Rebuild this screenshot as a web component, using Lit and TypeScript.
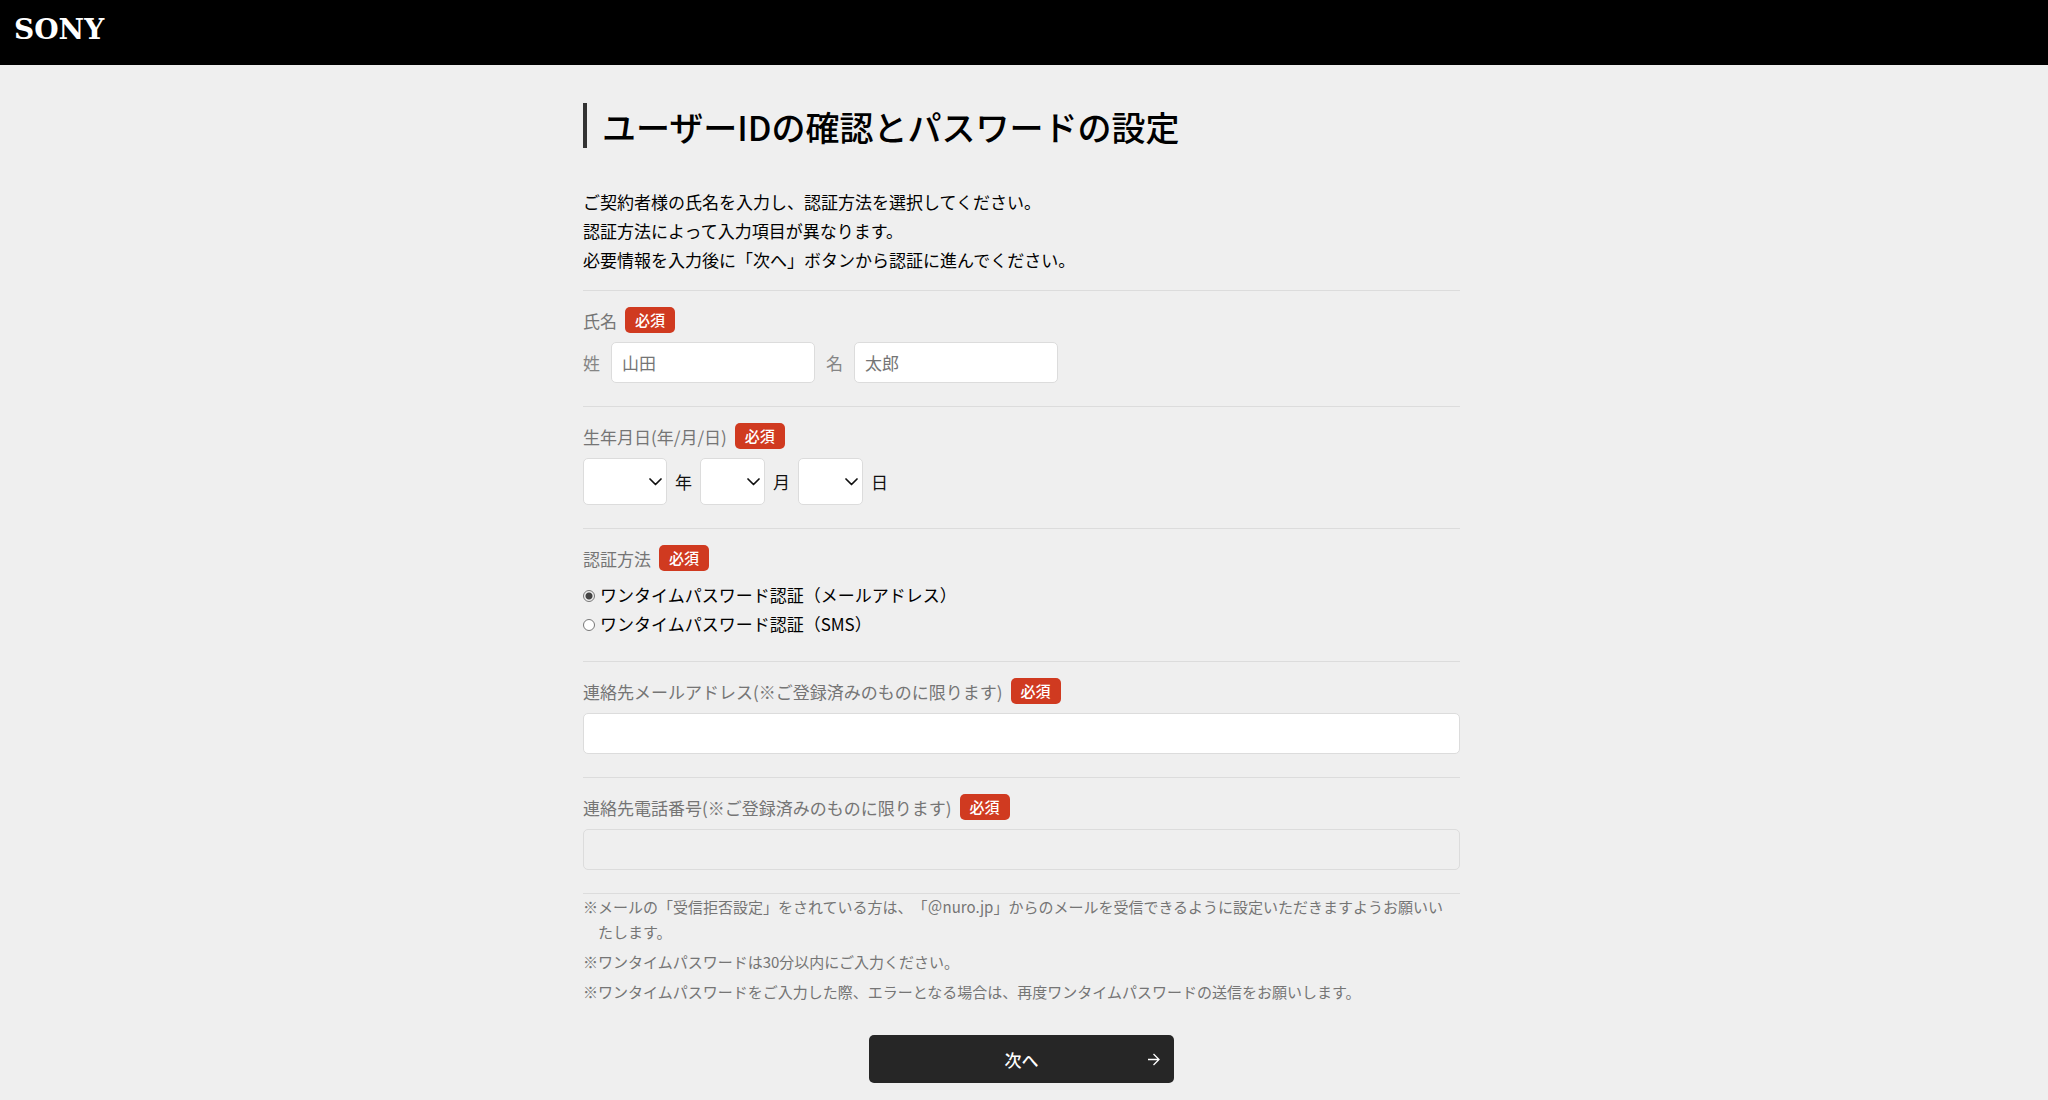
import { LitElement, html, css, svg } from "lit";
import { customElement, state } from "lit/decorators.js";

const range = (from: number, to: number) =>
  Array.from({ length: to - from + 1 }, (_, i) => from + i);

const DATE_PARTS = [
  { id: "year", unit: "年", wide: true, values: range(1920, 2024) },
  { id: "month", unit: "月", wide: false, values: range(1, 12) },
  { id: "day", unit: "日", wide: false, values: range(1, 31) },
];

const METHODS = [
  { id: "mail", text: "ワンタイムパスワード認証（メールアドレス）" },
  { id: "sms", text: "ワンタイムパスワード認証（SMS）" },
];

const NOTES = [
  "※メールの「受信拒否設定」をされている方は、「＠nuro.jp」からのメールを受信できるように設定いただきますようお願いいたします。",
  "※ワンタイムパスワードは30分以内にご入力ください。",
  "※ワンタイムパスワードをご入力した際、エラーとなる場合は、再度ワンタイムパスワードの送信をお願いします。",
];

const chevron = svg`<path d="M1 1 L6.5 6.5 L12 1" fill="none" stroke="#111" stroke-width="1.7" stroke-linecap="round" stroke-linejoin="round"/>`;

@customElement("required-badge")
class RequiredBadge extends LitElement {
  static styles = css`
    :host {
      display: inline-flex;
      align-items: center;
      justify-content: center;
      box-sizing: border-box;
      height: 26px;
      padding: 0 10px;
      border-radius: 5px;
      background: #d03a20;
      color: #fff;
      font-size: 15px;
      font-weight: 500;
      line-height: 26px;
    }
  `;
  render() {
    return html`必須`;
  }
}

@customElement("site-header")
class SiteHeader extends LitElement {
  static styles = css`
    :host {
      display: block;
    }
    .bar {
      display: flex;
      align-items: flex-start;
      box-sizing: border-box;
      height: 65px;
      padding: 14px 14px 0;
      background: #000;
    }
    .logo {
      color: #fff;
      font: bold 28px/32px "DejaVu Serif", "Liberation Serif", serif;
      text-decoration: none;
    }
  `;
  render() {
    return html`<header class="bar"><a class="logo" href="#">SONY</a></header>`;
  }
}

@customElement("app-root")
class AppRoot extends LitElement {
  @state() private method = "mail";

  static styles = css`
    :host {
      display: block;
      min-height: 100vh;
      background: #efefef;
      color: #000;
      font-family: "Noto Sans CJK JP", "Noto Sans", sans-serif;
      font-size: 17px;
      line-height: 29px;
      text-spacing-trim: space-all;
    }
    .page {
      display: flex;
      justify-content: center;
      padding: 38px 21px 16px 16px;
    }
    .content {
      flex: 1;
      max-width: 877px;
    }
    .title {
      margin: 0 0 39px;
      padding: 2px 0 0 15px;
      border-left: 4px solid #333;
      font-size: 34px;
      font-weight: 500;
      line-height: 43px;
    }
    .lead {
      margin: 0 0 16px;
    }
    .group {
      margin: 0;
      padding: 16px 0 23px;
      border: 0;
      border-top: 1px solid #dcdcdc;
      min-width: 0;
    }
    .group.last {
      border-bottom: 1px solid #dcdcdc;
    }
    .heading {
      display: flex;
      align-items: center;
      gap: 8px;
      height: 26px;
      margin-bottom: 9px;
      color: #757575;
    }
    .row {
      display: flex;
      align-items: center;
      flex-wrap: wrap;
    }
    .names {
      gap: 11px;
      color: #858585;
    }
    .text {
      box-sizing: border-box;
      display: block;
      height: 41px;
      width: 100%;
      margin: 0;
      padding: 0 10px;
      border: 1px solid #dcdcdc;
      border-radius: 5px;
      background: #fff;
      color: #000;
      font: inherit;
    }
    .text.short {
      width: 204px;
    }
    .text::placeholder {
      color: #757575;
      opacity: 1;
    }
    .text:disabled {
      background: transparent;
    }
    .dates {
      gap: 8px;
      color: #111;
    }
    .picker {
      display: grid;
      align-items: center;
      justify-items: end;
      width: 65px;
    }
    .picker.wide {
      width: 84px;
    }
    .select {
      grid-area: 1 / 1;
      box-sizing: border-box;
      width: 100%;
      height: 47px;
      margin: 0;
      padding: 0 20px 0 8px;
      appearance: none;
      border: 1px solid #dcdcdc;
      border-radius: 5px;
      background: #fff;
      color: #000;
      font: inherit;
    }
    .chevron {
      grid-area: 1 / 1;
      width: 13px;
      height: 8px;
      margin-right: 5px;
      pointer-events: none;
    }
    .option {
      display: flex;
      align-items: center;
      gap: 5px;
    }
    .radio {
      box-sizing: border-box;
      width: 12px;
      height: 12px;
      margin: 2px 0 0;
      appearance: none;
      border: 1px solid #777;
      border-radius: 50%;
      background: #fff;
    }
    .radio:checked {
      background: radial-gradient(circle, #444 0 3px, #efefef 4px);
    }
    .notes {
      display: grid;
      gap: 5px;
      margin: 0 0 31px;
      padding: 0 8px 0 0;
      list-style: none;
      color: #757575;
      font-size: 15px;
      line-height: 25px;
    }
    .note {
      padding-left: 15px;
      text-indent: -15px;
    }
    .next {
      display: grid;
      grid-template-columns: 1fr auto 1fr;
      align-items: center;
      width: 305px;
      height: 48px;
      margin: 0 auto;
      padding: 0 14px;
      border: 0;
      border-radius: 5px;
      background: #262626;
      color: #fff;
      font: inherit;
      font-weight: 500;
    }
    .caption {
      grid-column: 2;
    }
    .arrow {
      justify-self: end;
      width: 13px;
      height: 13px;
    }
  `;

  private heading(text: string, target = "") {
    return html`<div class="heading">
      ${target ? html`<label for=${target}>${text}</label>` : html`<span>${text}</span>`}
      <required-badge></required-badge>
    </div>`;
  }

  render() {
    return html`
      <site-header></site-header>
      <main class="page">
        <form class="content" @submit=${(e: Event) => e.preventDefault()}>
          <h1 class="title">ユーザーIDの確認とパスワードの設定</h1>
          <p class="lead">
            ご契約者様の氏名を入力し、認証方法を選択してください。<br />認証方法によって入力項目が異なります。<br />必要情報を入力後に「次へ」ボタンから認証に進んでください。
          </p>

          <div class="group" role="group" aria-label="氏名">
            ${this.heading("氏名")}
            <div class="row names">
              <label for="family">姓</label>
              <input class="text short" id="family" type="text" placeholder="山田" />
              <label for="given">名</label>
              <input class="text short" id="given" type="text" placeholder="太郎" />
            </div>
          </div>

          <div class="group" role="group" aria-label="生年月日">
            ${this.heading("生年月日(年/月/日)")}
            <div class="row dates">
              ${DATE_PARTS.map(
                (part) => html`
                  <span class="picker ${part.wide ? "wide" : ""}">
                    <select class="select" id=${part.id}>
                      <option value=""></option>
                      ${part.values.map((v) => html`<option value=${v}>${v}</option>`)}
                    </select>
                    <svg class="chevron" viewBox="0 0 13 8" aria-hidden="true">${chevron}</svg>
                  </span>
                  <label for=${part.id}>${part.unit}</label>
                `
              )}
            </div>
          </div>

          <div class="group" role="radiogroup" aria-label="認証方法">
            ${this.heading("認証方法")}
            ${METHODS.map(
              (m) => html`<label class="option" for=${m.id}>
                <input
                  class="radio"
                  type="radio"
                  name="method"
                  id=${m.id}
                  .checked=${this.method === m.id}
                  @change=${() => (this.method = m.id)}
                />${m.text}
              </label>`
            )}
          </div>

          <div class="group">
            ${this.heading("連絡先メールアドレス(※ご登録済みのものに限ります)", "email")}
            <input class="text" id="email" type="email" ?disabled=${this.method !== "mail"} />
          </div>

          <div class="group last">
            ${this.heading("連絡先電話番号(※ご登録済みのものに限ります)", "phone")}
            <input class="text" id="phone" type="tel" ?disabled=${this.method !== "sms"} />
          </div>

          <ul class="notes">
            ${NOTES.map((n) => html`<li class="note">${n}</li>`)}
          </ul>

          <button class="next" type="submit">
            <span class="caption">次へ</span>
            <svg class="arrow" viewBox="0 0 13 13" aria-hidden="true">
              <path d="M1 6.5 H12 M6.5 1 L12 6.5 L6.5 12" fill="none" stroke="#fff" stroke-width="1.3" />
            </svg>
          </button>
        </form>
      </main>
    `;
  }
}
